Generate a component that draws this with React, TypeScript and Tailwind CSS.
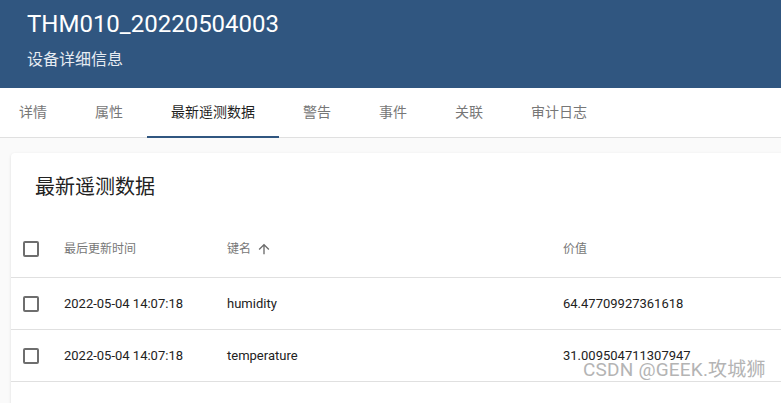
import React from 'react';

const latin = "font-['Roboto','Noto_Sans_CJK_SC',sans-serif]";

const tabs = ['详情', '属性', '最新遥测数据', '警告', '事件', '关联', '审计日志'];

const rows = [
  { ts: '2022-05-04 14:07:18', key: 'humidity', value: '64.47709927361618' },
  { ts: '2022-05-04 14:07:18', key: 'temperature', value: '31.009504711307947' }
];

const Checkbox = () => (
  <div className="w-4 h-4 rounded-[2px] border-2 border-[#6e6e6e]" />
);

const ArrowUp = () => (
  <svg width="16" height="16" viewBox="0 0 24 24" className="fill-[#6b6b6b]">
    <path d="M4 12l1.41 1.41L11 7.83V20h2V7.83l5.58 5.59L20 12l-8-8-8 8z" />
  </svg>
);

const App = () => {
  return (
    <div className={`relative w-[781px] h-[403px] overflow-hidden bg-[#fafafa] ${latin}`}>
      <div className="h-[88px] bg-[#305680] px-[27px] pt-[9px] text-white">
        <h1 className="text-[24px] leading-[30px]">THM010_20220504003</h1>
        <p className="mt-[9px] text-[16px] leading-[24px] text-[#e6ebf2]">设备详细信息</p>
      </div>

      <div className="h-[50px] bg-white border-b border-[#e0e0e0] flex -ml-[5px]">
        {tabs.map((t, i) => (
          <div
            key={t}
            className={`relative flex items-center px-6 text-[14px] ${
              i === 2 ? 'text-[#1f1f1f]' : 'text-[#777]'
            }`}
          >
            {t}
            {i === 2 && <div className="absolute left-0 right-0 -bottom-px h-[2px] bg-[#305680]" />}
          </div>
        ))}
      </div>

      <div className="pt-[15px] pl-[11px]">
        <div className="bg-white -mr-5 shadow-[0_1px_3px_rgba(0,0,0,0.12)] rounded-sm">
          <div className="h-[67px] flex items-center pl-6 text-[20px] text-[#222]">最新遥测数据</div>

          <div className="h-[58px] flex items-center border-b border-[#e0e0e0] text-[12px] text-[#777]">
            <div className="w-[53px] pl-3">
              <Checkbox />
            </div>
            <div className="w-[163px]">最后更新时间</div>
            <div className="w-[336px] flex items-center gap-[5px]">
              键名
              <ArrowUp />
            </div>
            <div>价值</div>
          </div>

          {rows.map((r) => (
            <div key={r.key} className="h-[52px] flex items-center border-b border-[#e0e0e0] text-[13px] text-[#222]">
              <div className="w-[53px] pl-3">
                <Checkbox />
              </div>
              <div className="w-[163px]">{r.ts}</div>
              <div className="w-[336px]">{r.key}</div>
              <div>{r.value}</div>
            </div>
          ))}
          <div className="h-[40px]" />
        </div>
      </div>

      <div className="absolute left-[583px] top-[356px] text-[19px] leading-[28px] tracking-[0.2px] text-[#b4b4b4] [text-shadow:0_0_2px_#fff]">
        CSDN @GEEK.攻城狮
      </div>
    </div>
  );
};

export default App;
